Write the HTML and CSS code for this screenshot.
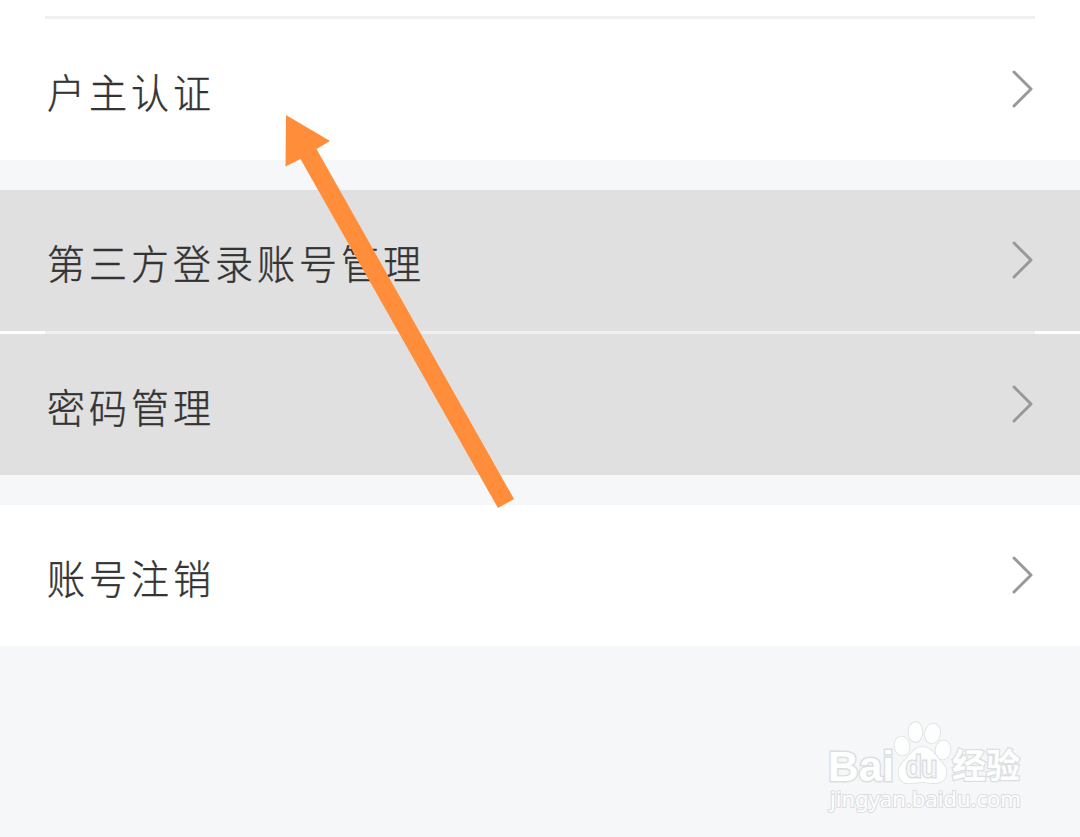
FILE: index.html
```
<!DOCTYPE html>
<html lang="zh-CN">
<head>
    <meta charset="UTF-8">
    <meta name="viewport" content="width=device-width, initial-scale=1.0">
    <title>账号管理</title>
    <link rel="stylesheet" href="styles.css">
</head>
<body>
    <main class="settings">
        <section class="group group-first">
            <div class="divider"></div>
            <a class="row">
                <span class="label">户主认证</span>
                <svg class="chevron" viewBox="0 0 24 40"><path d="M3 3L20 20L3 37"/></svg>
            </a>
        </section>
        <section class="group">
            <a class="row pressed">
                <span class="label">第三方登录账号管理</span>
                <svg class="chevron" viewBox="0 0 24 40"><path d="M3 3L20 20L3 37"/></svg>
            </a>
            <div class="divider"></div>
            <a class="row pressed">
                <span class="label">密码管理</span>
                <svg class="chevron" viewBox="0 0 24 40"><path d="M3 3L20 20L3 37"/></svg>
            </a>
        </section>
        <section class="group">
            <a class="row">
                <span class="label">账号注销</span>
                <svg class="chevron" viewBox="0 0 24 40"><path d="M3 3L20 20L3 37"/></svg>
            </a>
        </section>
    </main>

    <svg class="arrow" viewBox="0 0 230 394">
        <path d="M1 0L45 26L31.500 34L229 384L213 393L15.500 44L0.500 51.500Z"/>
    </svg>

    <svg class="watermark" viewBox="0 0 210 104">
        <g class="mark">
            <text class="brand" x="6" y="66" textLength="66" lengthAdjust="spacingAndGlyphs">Bai</text>
            <ellipse cx="80" cy="31" rx="7.500" ry="9.500" transform="rotate(-8 80 31)"/>
            <ellipse cx="93.500" cy="17" rx="7" ry="10"/>
            <ellipse cx="110.500" cy="18.500" rx="7.500" ry="10" transform="rotate(12 110.500 18.500)"/>
            <ellipse cx="121" cy="35" rx="7.500" ry="9.500" transform="rotate(8 121 35)"/>
            <path d="M100 32C92 32 89 39 84 44C79 49 75 54 77 61C79 68 85 69 91 68C97 67 103 67 109 68C116 69 123 67 124 60C126 52 120 48 116 43C112 38 109 32 100 32Z"/>
            <text class="du" x="84" y="62" textLength="31" lengthAdjust="spacingAndGlyphs">du</text>
            <text class="cn" x="130" y="63" textLength="68" lengthAdjust="spacingAndGlyphs">经验</text>
            <text class="site" x="8" y="92" textLength="191" lengthAdjust="spacingAndGlyphs">jingyan.baidu.com</text>
        </g>
    </svg>
</body>
</html>
```
FILE: styles.css
```
body {
    margin: 0;
    min-height: 837px;
    position: relative;
    background-color: #f5f7f9;
    font-family: "Noto Sans CJK SC", sans-serif;
    overflow: hidden;
}
.settings {
    display: flex;
    flex-direction: column;
    gap: 30px;
}
.group {
    background-color: white;
}
.group-first {
    padding-top: 16px;
}
.divider {
    height: 3px;
    margin: 0 45px;
    background-color: #f0f0f0;
}
.row {
    display: flex;
    align-items: center;
    justify-content: space-between;
    height: 141px;
    box-sizing: border-box;
    padding: 0 45px 0 47px;
}
.pressed {
    background-color: #e0e0e0;
}
.label {
    padding-top: 3px;
    font-size: 38px;
    font-weight: 300;
    line-height: 56px;
    letter-spacing: 4px;
    color: #333;
    transform: scaleY(1.06);
    -webkit-text-stroke: 0.4px #333;
}
.chevron {
    width: 24px;
    height: 40px;
    padding-bottom: 2px;
    fill: none;
    stroke: #999;
    stroke-width: 3;
    stroke-linecap: round;
    stroke-linejoin: round;
}
.arrow {
    position: absolute;
    left: 285px;
    top: 115px;
    width: 230px;
    height: 394px;
    fill: #ff8d3a;
}
.watermark {
    position: absolute;
    left: 822px;
    top: 715px;
    width: 210px;
    height: 104px;
}
.mark {
    fill: #fdfefe;
    stroke: #dcdedf;
    stroke-width: 1.500;
    paint-order: stroke;
}
.brand {
    font: bold 43px "Liberation Sans", sans-serif;
    stroke-width: 3;
}
.du {
    font: 29px "Liberation Sans", sans-serif;
    fill: #f5f7f9;
    stroke-width: 3;
}
.cn {
    font: bold 34px "Noto Sans CJK SC", sans-serif;
    stroke-width: 2.500;
}
.site {
    font: 21px "Noto Sans", sans-serif;
    stroke-width: 2;
}
```
